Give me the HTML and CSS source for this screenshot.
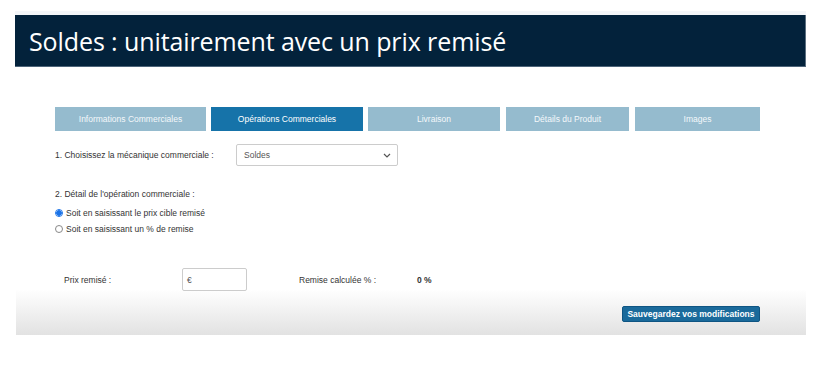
FILE: index.html
```html
<!DOCTYPE html>
<html lang="fr">
<head>
<meta charset="utf-8">
<link rel="stylesheet" href="styles.css">
</head>
<body>
<div class="page">
  <div class="panel">
    <header class="head"><h1>Soldes : unitairement avec un prix remisé</h1></header>
    <div class="content">
      <nav class="tabs">
        <div class="tab t1">Informations Commerciales</div>
        <div class="tab t2 active">Opérations Commerciales</div>
        <div class="tab t3">Livraison</div>
        <div class="tab t4">Détails du Produit</div>
        <div class="tab t5">Images</div>
      </nav>
      <div class="row-select">
        <span class="lbl1">1. Choisissez la mécanique commerciale :</span>
        <div class="select"><span>Soldes</span>
          <svg width="8" height="5" viewBox="0 0 8 5"><path d="M1 1l3 3 3-3" fill="none" stroke="#555" stroke-width="1.2"/></svg>
        </div>
      </div>
      <div class="detail">2. Détail de l'opération commerciale :</div>
      <label class="radio"><span class="dot on"></span>Soit en saisissant le prix cible remisé</label>
      <label class="radio r2"><span class="dot"></span>Soit en saisissant un % de remise</label>
      <div class="row-prix">
        <span class="lblp">Prix remisé :</span>
        <div class="input">€</div>
        <span class="lblr">Remise calculée % :</span>
        <span class="val">0 %</span>
      </div>
      <div class="actions"><button class="save">Sauvegardez vos modifications</button></div>
    </div>
  </div>
</div>
</body>
</html>
```
FILE: styles.css
```css
html, body { margin: 0; padding: 0; background: #fff; }
body { font-family: "Liberation Sans", Arial, sans-serif; color: #333; width: 822px; height: 370px; overflow: hidden; }
.page { padding: 11px 16px 0 15px; }
.panel { width: 791px; border-top: 4px solid #f4f6f9; }
.head { background: #03223b; height: 51px; display: flex; align-items: center; padding-left: 14px; border-bottom: 1px solid #4d6479; border-right: 1px solid #5c6f80; }
.head h1 { margin: 0; font-family: "Open Sans", sans-serif; font-weight: 500; font-size: 25px; color: #fff; letter-spacing: -0.1px; }
.content { height: 268px; background: linear-gradient(#fff 0, #fff 222px, #e2e2e2 268px); padding: 40px 0 0 39px; box-sizing: border-box; margin-left: 1px; }
.tabs { display: flex; height: 24px; }
.tab { background: #95bbce; color: #f4f8fb; font-size: 8.5px; display: flex; align-items: center; justify-content: center; margin-right: 5px; }
.tab.active { background: #1673a9; color: #fff; }
.t1 { width: 151px; }
.t2 { width: 152px; }
.t3 { width: 132px; margin-right: 6px; }
.t4 { width: 123px; margin-right: 6px; }
.t5 { width: 125px; }
.row-select { display: flex; align-items: center; margin-top: 13px; height: 22px; }
.lbl1 { font-size: 8.5px; width: 181px; }
.select { width: 162px; height: 22px; box-sizing: border-box; border: 1px solid #ccc; border-radius: 2px; display: flex; align-items: center; justify-content: space-between; padding: 0 6px 0 7px; font-size: 8.5px; color: #555; }
.detail { font-size: 8.5px; margin-top: 23px; }
.radio { display: flex; align-items: center; font-size: 8.5px; margin-top: 9px; }
.radio.r2 { margin-top: 6px; }
.dot { width: 6px; height: 6px; border: 1px solid #888; border-radius: 50%; margin-right: 3px; box-sizing: content-box; }
.dot.on { border-color: #1a73e8; background: radial-gradient(circle, #1a73e8 0 2.5px, #fff 3px); }
.row-prix { display: flex; align-items: center; margin-top: 34px; height: 23px; padding-left: 9px; }
.lblp { font-size: 8.5px; width: 118px; }
.input { width: 65px; height: 23px; box-sizing: border-box; border: 1px solid #ccc; border-radius: 2px; font-size: 8.5px; display: flex; align-items: center; padding-left: 4px; color: #555; }
.lblr { font-size: 8.5px; margin-left: 52px; width: 118px; }
.val { font-size: 8.5px; font-weight: bold; }
.actions { display: flex; justify-content: flex-end; margin-top: 15px; width: 705px; }
.save { background: #1a6a9b; color: #fff; border: 1px solid #0f5583; border-radius: 2px; font-family: "Liberation Sans", Arial, sans-serif; font-weight: bold; font-size: 8.5px; height: 16px; width: 138px; padding: 0; }
```
